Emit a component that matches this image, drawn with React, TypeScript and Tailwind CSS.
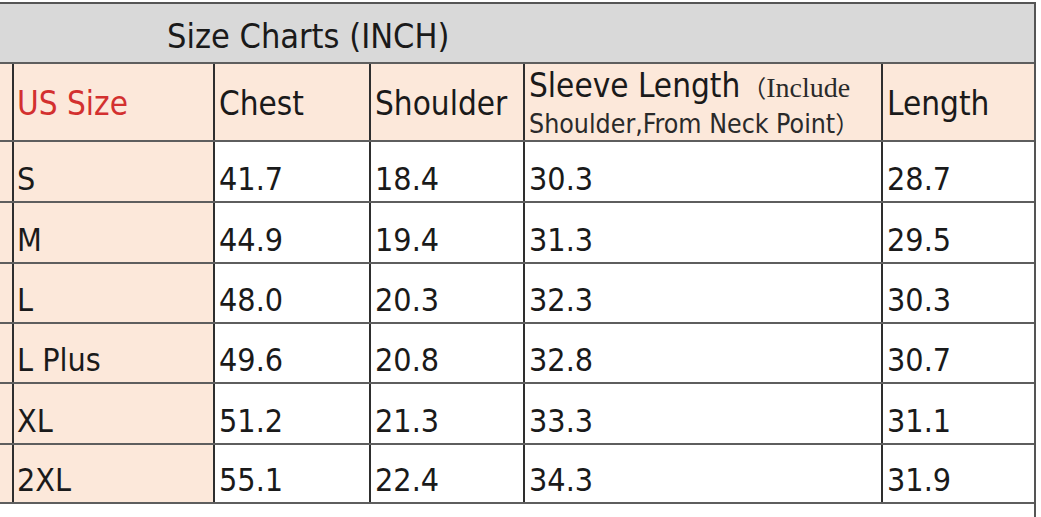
import React from "react";

const rows: { size: string; vals: string[]; h: string }[] = [
  { size: "S", vals: ["41.7", "18.4", "30.3", "28.7"], h: "h-[61px]" },
  { size: "M", vals: ["44.9", "19.4", "31.3", "29.5"], h: "h-[61px]" },
  { size: "L", vals: ["48.0", "20.3", "32.3", "30.3"], h: "h-[60px]" },
  { size: "L Plus", vals: ["49.6", "20.8", "32.8", "30.7"], h: "h-[60px]" },
  { size: "XL", vals: ["51.2", "21.3", "33.3", "31.1"], h: "h-[61px]" },
  { size: "2XL", vals: ["55.1", "22.4", "34.3", "31.9"], h: "h-[59px]" },
];

const font = "font-['DejaVu_Sans_Condensed','DejaVu_Sans',sans-serif]";
const cols = "grid grid-cols-[12px_201px_156px_154px_358px_153px]";

export default function App() {
  return (
    <div className={`w-[1041px] h-[517px] bg-white pt-[2px] flex flex-col ${font} text-[#1a1a1a]`}>
      <div className="w-[1036px] border-t-2 border-r-2 border-[#555]">
        {/* Title */}
        <div className="h-[60px] bg-[#d9d9d9] border-b-2 border-[#5e5e5e] flex items-center pl-[167px]">
          <span className="text-[34px] leading-none pt-[5px]">Size Charts (INCH)</span>
        </div>
        {/* Header */}
        <div className={`${cols} h-[78px] bg-[#fce8da] border-b-2 border-[#5e5e5e]`}>
          <div />
          <div className="border-l-2 border-[#2e2e2e] flex items-center pl-[3px]">
            <span className="text-[#d3302f] text-[33px] leading-none pt-[2px]">US Size</span>
          </div>
          <div className="border-l-2 border-[#2e2e2e] flex items-center pl-[4px]">
            <span className="text-[33px] leading-none pt-[2px]">Chest</span>
          </div>
          <div className="border-l-2 border-[#2e2e2e] flex items-center pl-[4px]">
            <span className="text-[33px] leading-none pt-[2px]">Shoulder</span>
          </div>
          <div className="border-l-2 border-[#2e2e2e] flex flex-col justify-center pl-[4px] pt-[2px]">
            <div className="flex items-baseline whitespace-nowrap leading-none">
              <span className="text-[33px]">Sleeve Length</span>
              <span className="text-[24px] font-['Noto_Sans_CJK_SC',sans-serif] ml-[2px] text-[#2a2a2a]">（</span>
              <span className="text-[28px] font-['Liberation_Serif',serif] text-[#2a2a2a]">Include</span>
            </div>
            <div className="flex items-baseline whitespace-nowrap leading-none mt-[9px] text-[#2a2a2a]">
              <span className="text-[26.5px]">Shoulder,From Neck Point</span>
              <span className="text-[24px] font-['Noto_Sans_CJK_SC',sans-serif]">）</span>
            </div>
          </div>
          <div className="border-l-2 border-[#2e2e2e] flex items-center pl-[4px]">
            <span className="text-[33px] leading-none pt-[2px]">Length</span>
          </div>
        </div>
        {/* Data rows */}
        {rows.map((r) => (
          <div key={r.size} className={`${cols} ${r.h} border-b-2 border-[#5e5e5e]`}>
            <div className="bg-[#fce8da]" />
            <div className="bg-[#fce8da] border-l-2 border-[#2e2e2e] flex items-end pl-[3px] pb-[6px]">
              <span className="text-[32px] leading-none">{r.size}</span>
            </div>
            {r.vals.map((v, i) => (
              <div key={i} className="border-l-2 border-[#2e2e2e] flex items-end pl-[4px] pb-[6px]">
                <span className="text-[32px] leading-none">{v}</span>
              </div>
            ))}
          </div>
        ))}
      </div>
      <div className="w-[1036px] flex-1 border-r-2 border-[#555]" />
    </div>
  );
}
